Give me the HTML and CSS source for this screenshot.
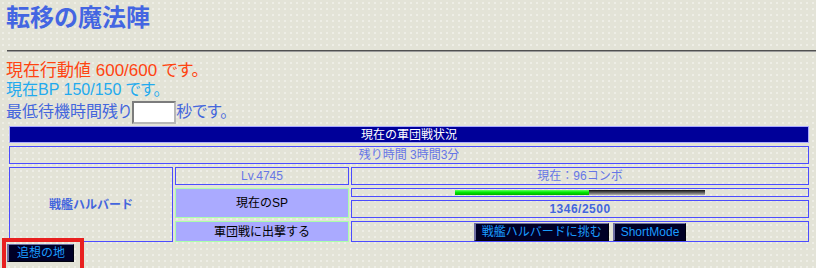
FILE: index.html
```html
<!DOCTYPE html>
<html lang="ja">
<head>
<meta charset="utf-8">
<title>転移の魔法陣</title>
<link rel="stylesheet" href="styles.css">
</head>
<body>
<div class="page">
  <h1 class="title">転移の魔法陣</h1>
  <div class="rule"></div>
  <p class="line line-ap">現在行動値 600/600 です。</p>
  <p class="line line-bp">現在BP 150/150 です。</p>
  <div class="line-wait"><span class="wait-text">最低待機時間残り</span><input class="wait-input" type="text"><span class="wait-text">秒です。</span></div>
  <div class="war">
    <div class="cell head">現在の軍団戦状況</div>
    <div class="cell remain">残り時間 3時間3分</div>
    <div class="cell boss">戦艦ハルバード</div>
    <div class="cell lv">Lv.4745</div>
    <div class="cell combo">現在：96コンボ</div>
    <div class="cell label sp-label">現在のSP</div>
    <div class="cell bar-cell"><div class="bar"><div class="bar-fill" style="width:134px"></div></div></div>
    <div class="cell count">1346/2500</div>
    <div class="cell label sortie-label">軍団戦に出撃する</div>
    <div class="cell actions"><button class="btn">戦艦ハルバードに挑む</button><button class="btn">ShortMode</button></div>
  </div>
  <div class="footer"><button class="btn back">追想の地</button></div>
  <div class="highlight"></div>
</div>
</body>
</html>
```
FILE: styles.css
```css
html, body {
  margin: 0;
  padding: 0;
}
body {
  width: 816px;
  height: 268px;
  overflow: hidden;
  background-color: #e3e3d7;
  background-image: radial-gradient(circle, #f4f4ee 0.6px, transparent 0.9px);
  background-size: 6px 6px;
  font-family: "Liberation Sans", "Noto Sans CJK JP", sans-serif;
}
.page {
  position: relative;
  padding-left: 6px;
}
.title {
  margin: 4px 0 0;
  font-size: 24px;
  line-height: 28px;
  font-weight: bold;
  color: #4466e2;
}
.rule {
  margin-top: 18px;
  margin-left: 1px;
  height: 0;
  border-top: 1px solid #505050;
  border-bottom: 1px solid #9a9a9a;
}
.line {
  margin: 0;
  line-height: 19px;
  font-feature-settings: "palt";
}
.line-ap {
  margin-top: 9px;
  font-size: 17px;
  color: #ff4411;
}
.line-bp {
  font-size: 16px;
  color: #22aaee;
}
.line-wait {
  display: flex;
  align-items: flex-start;
  margin-top: 2px;
  height: 23px;
  font-size: 16px;
  line-height: 19px;
  color: #4466dd;
  font-feature-settings: "palt";
}
.wait-text {
  padding-top: 1px;
}
.wait-input {
  box-sizing: border-box;
  width: 44px;
  height: 23px;
  margin: 0 0 0 1px;
  padding: 0;
  background: #fff;
  border: 2px solid;
  border-color: #7c7c7c #b8b8b8 #b8b8b8 #7c7c7c;
}
.war {
  display: grid;
  grid-template-columns: 164px 174px 458px;
  grid-template-rows: 17px 18px 18px 9px 18px 21px;
  gap: 3px 2px;
  width: 800px;
  margin: 2px 0 0 3px;
  font-size: 12px;
  line-height: 14px;
}
.cell {
  box-sizing: border-box;
  display: flex;
  align-items: center;
  justify-content: center;
  border: 1px solid #4c4cff;
  color: #6676e6;
  white-space: nowrap;
}
.head {
  grid-column: 1 / -1;
  background: #000099;
  border-color: #aaaaff;
  color: #ffffff;
}
.remain {
  grid-column: 1 / -1;
}
.boss {
  grid-column: 1;
  grid-row: 3 / 7;
  font-weight: bold;
  color: #4466dd;
}
.lv {
  grid-column: 2;
  grid-row: 3;
}
.combo {
  grid-column: 3;
  grid-row: 3;
}
.label {
  background: #aaaaff;
  border-color: #aaffaa;
  color: #000000;
}
.sp-label {
  grid-column: 2;
  grid-row: 4 / 6;
}
.sortie-label {
  grid-column: 2;
  grid-row: 6;
}
.bar-cell {
  grid-column: 3;
  grid-row: 4;
}
.bar {
  width: 250px;
  height: 5px;
  background: linear-gradient(#111111, #555555 45%, #b0b0b0);
}
.bar-fill {
  height: 100%;
  background: linear-gradient(#66ff66, #00ee00 45%, #00aa00);
}
.count {
  grid-column: 3;
  grid-row: 5;
  font-weight: bold;
  color: #4466dd;
  letter-spacing: 0.5px;
}
.actions {
  grid-column: 3;
  grid-row: 6;
  gap: 4px;
}
.btn {
  box-sizing: border-box;
  height: 18px;
  margin: 0;
  padding: 0 6px;
  background: #000026;
  color: #1a9cff;
  font-family: "Liberation Sans", "Noto Sans CJK JP", sans-serif;
  font-size: 12px;
  line-height: 14px;
  border: 1px solid;
  border-left-width: 2px;
  border-color: #6e6ea4 #00000e #00000e #6e6ea4;
  white-space: nowrap;
}
.footer {
  margin-top: 1px;
  padding-left: 1px;
}
.back {
  padding: 0 8px;
}
.highlight {
  position: absolute;
  left: 2px;
  top: 234px;
  width: 82px;
  height: 34px;
  box-sizing: border-box;
  border: 4px solid #e8201f;
}
```
